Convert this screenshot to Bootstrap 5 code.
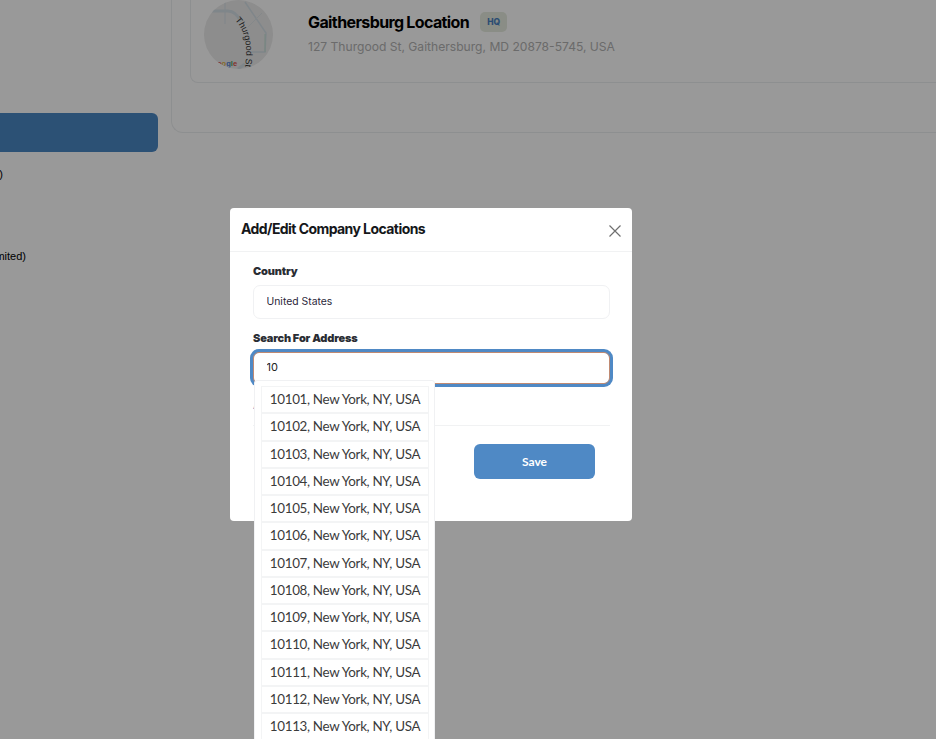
<!DOCTYPE html>
<html lang="en">
<head>
<meta charset="utf-8">
<title>Company Locations</title>
<link rel="stylesheet" href="https://cdn.jsdelivr.net/npm/bootstrap@5.3.0/dist/css/bootstrap.min.css">
<style>
html,body{height:739px;overflow:hidden;background:#fff}
body{font-family:Inter,"Liberation Sans",sans-serif;color:#000}
.page-wrap{width:936px;height:739px;overflow:hidden}
.side-col{width:158px;flex:none;padding-top:113px}
.side-cta{height:39px;background:#4a87c4;border-radius:0 6px 6px 0}
.side-line{font-family:"Liberation Sans",sans-serif;font-size:11px;line-height:14px;white-space:nowrap;display:flex;justify-content:flex-end;overflow:hidden}
.side-a{width:3px;margin-top:15px}
.side-b{width:26px;margin-top:68px}
.main-panel{width:800px;height:133px;margin-left:13px;border:1px solid #eceef0;border-top:0;border-right:0;border-radius:0 0 0 12px;padding-left:18px;flex:none}
.loc-card{height:83px;border:1px solid #eceef0;border-top:0;border-right:0;border-radius:0 0 0 8px;padding-left:13px;gap:36px}
.map-thumb{width:69px;height:69px;flex:none;margin-right:-1px}
.loc-info{padding-top:12px}
.loc-name{font-size:16px;font-weight:700;letter-spacing:-.6px;line-height:20px;word-spacing:-.5px}
.hq-tag{font-size:8.5px;font-weight:800;color:#4a80c0;background:#e6ecdf;border-radius:5px;width:27px;height:20px;margin-left:11px;display:inline-flex;align-items:center;justify-content:center}
.loc-addr{font-size:12.1px;color:#b2b2b2;line-height:16px;margin-top:7px}
.dim-layer{position:fixed;inset:0;background:rgba(0,0,0,.4)}
.dialog-box{position:fixed;left:230px;top:208px;width:402px;height:313px;border:0;border-radius:4px;background:#fff}
.dialog-head{height:44px;padding:0 11px;border-bottom:1px solid #f1f2f3}
.dialog-title{font-size:14px;font-weight:700;letter-spacing:-.57px;margin:0;color:#15171a}
.x-btn{width:14px;height:14px;padding:0;background:none;border:0;margin-right:-1px;margin-top:2px}
.dialog-body{padding:13px 22px 0 23px}
.f-label{font-size:11px;font-weight:900;color:#2a2d33;line-height:13px;margin-bottom:7px;letter-spacing:-.17px}
.f-input.form-control{height:34px;border:1px solid #f0f1f3;border-radius:7px;font-size:10.4px;padding:0 12.5px 2px;color:#2b1f3a;box-shadow:none}
.f-input.is-live.form-control{height:32px;margin-top:2px;border:1px solid #c08a72;border-radius:6px;box-shadow:0 0 0 3px #4f89c5;font-size:11px;color:#222;padding:0 12.5px 3px}
.row-gap{margin-top:13px}
.manual-link{font-size:10.5px;color:#4f89c5;margin-top:15px;line-height:13px}
.dialog-rule{border-top:1px solid #f1f2f3;margin-top:13px}
.save-btn.btn{width:121px;height:35px;margin:18px 15px 0 auto;display:block;background:#4f89c5;border:0;border-radius:6px;color:#fff;font-family:Lato,sans-serif;font-size:12px;font-weight:700;padding:0}
.suggest-box{position:fixed;left:254px;top:380px;width:181px;height:400px;background:#fff;border:1px solid #f0f1f3;border-radius:3px;padding:6px 6px 0 7px;font-family:Lato,sans-serif}
.suggest-item{height:25.25px;margin-bottom:2px;outline:1px solid #f3f4f5;background:#fff;font-size:13.4px;letter-spacing:-.32px;line-height:25px;color:#3b3b3b;text-align:center;white-space:nowrap}
</style>
</head>
<body>
<div class="page-wrap d-flex">
  <div class="side-col">
    <div class="side-cta"></div>
    <div class="side-line side-a"><span>(1)</span></div>
    <div class="side-line side-b"><span>(Unlimited)</span></div>
  </div>
  <div class="main-panel">
    <div class="loc-card d-flex">
      <svg class="map-thumb" viewBox="0 0 69 69" aria-hidden="true">
        <defs><clipPath id="c"><circle cx="34.5" cy="34.5" r="34.5"/></clipPath></defs>
        <g clip-path="url(#c)">
          <rect width="69" height="69" fill="#ebebeb"/>
          <path d="M6 11 H24 Q32 11 37 22" fill="none" stroke="#d4dfe6" stroke-width="3"/>
          <path d="M21 0 V24" fill="none" stroke="#d4dfe6" stroke-width="1"/>
          <path d="M41 2 L62 33 L61 52 H44" fill="none" stroke="#d4dfe6" stroke-width="1.5"/>
          <path d="M44 27 L58 13" fill="none" stroke="#dde3e6" stroke-width="1"/>
          <path d="M61 34 V52" fill="none" stroke="#c4e0d2" stroke-width="1"/>
          <path d="M34 69 L41 64" fill="none" stroke="#d4dfe6" stroke-width="3"/>
          <path id="tp" d="M31 20 Q46 36 41 67" fill="none"/>
          <text font-family="Liberation Sans,sans-serif" font-size="9" fill="#333"><textPath href="#tp">Thurgood St</textPath></text>
          <text x="13" y="66" font-family="Liberation Sans,sans-serif" font-size="7.5" font-weight="700"><tspan fill="#d9534f">o</tspan><tspan fill="#e0b23c">o</tspan><tspan fill="#4a80d0">g</tspan><tspan fill="#4a9d5b">l</tspan><tspan fill="#d9534f">e</tspan></text>
        </g>
      </svg>
      <div class="loc-info">
        <div class="d-flex align-items-center"><span class="loc-name">Gaithersburg Location</span><span class="hq-tag">HQ</span></div>
        <div class="loc-addr">127 Thurgood St, Gaithersburg, MD 20878-5745, USA</div>
      </div>
    </div>
  </div>
</div>

<div class="dim-layer"></div>

<div class="dialog-box modal-content">
  <div class="dialog-head d-flex align-items-center justify-content-between">
    <h5 class="dialog-title">Add/Edit Company Locations</h5>
    <button type="button" class="x-btn" aria-label="Close">
      <svg width="14" height="14" viewBox="0 0 14 14" class="d-block"><path d="M1.5 1.5 12.5 12.5M12.5 1.5 1.5 12.5" stroke="#6f6f6f" stroke-width="1.2" fill="none"/></svg>
    </button>
  </div>
  <div class="dialog-body">
    <div class="f-label">Country</div>
    <input class="form-control f-input" value="United States">
    <div class="f-label row-gap">Search For Address</div>
    <input class="form-control f-input is-live" value="10">
    <div class="manual-link">Add address manually</div>
    <div class="dialog-rule"></div>
    <button type="button" class="btn save-btn">Save</button>
  </div>
</div>

<div class="suggest-box">
  <div class="suggest-item">10101, New York, NY, USA</div>
  <div class="suggest-item">10102, New York, NY, USA</div>
  <div class="suggest-item">10103, New York, NY, USA</div>
  <div class="suggest-item">10104, New York, NY, USA</div>
  <div class="suggest-item">10105, New York, NY, USA</div>
  <div class="suggest-item">10106, New York, NY, USA</div>
  <div class="suggest-item">10107, New York, NY, USA</div>
  <div class="suggest-item">10108, New York, NY, USA</div>
  <div class="suggest-item">10109, New York, NY, USA</div>
  <div class="suggest-item">10110, New York, NY, USA</div>
  <div class="suggest-item">10111, New York, NY, USA</div>
  <div class="suggest-item">10112, New York, NY, USA</div>
  <div class="suggest-item">10113, New York, NY, USA</div>
</div>
<script src="https://cdn.jsdelivr.net/npm/bootstrap@5.3.0/dist/js/bootstrap.bundle.min.js"></script>
</body>
</html>
